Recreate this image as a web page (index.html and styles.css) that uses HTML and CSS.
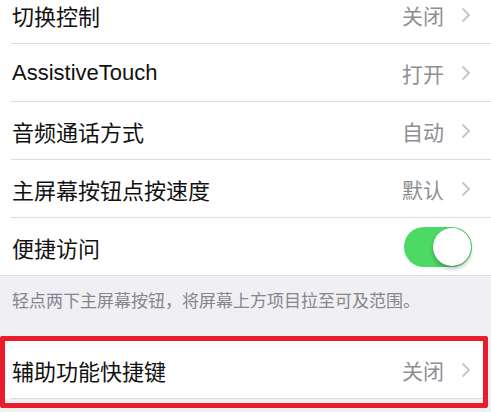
FILE: index.html
```html
<!DOCTYPE html>
<html lang="zh-CN">
<head>
    <meta charset="UTF-8">
    <meta name="viewport" content="width=device-width, initial-scale=1.0">
    <title>辅助功能</title>
    <link rel="stylesheet" href="styles.css">
</head>
<body>
  <div class="group first">
    <div class="row">
      <span class="label">切换控制</span>
      <span class="value">关闭</span>
      <svg class="chev" width="10" height="16" viewBox="0 0 10 16"><polyline points="1.5,1.5 8,8 1.5,14.5"/></svg>
    </div>
    <div class="row">
      <span class="label">AssistiveTouch</span>
      <span class="value">打开</span>
      <svg class="chev" width="10" height="16" viewBox="0 0 10 16"><polyline points="1.5,1.5 8,8 1.5,14.5"/></svg>
    </div>
    <div class="row">
      <span class="label">音频通话方式</span>
      <span class="value">自动</span>
      <svg class="chev" width="10" height="16" viewBox="0 0 10 16"><polyline points="1.5,1.5 8,8 1.5,14.5"/></svg>
    </div>
    <div class="row">
      <span class="label">主屏幕按钮点按速度</span>
      <span class="value">默认</span>
      <svg class="chev" width="10" height="16" viewBox="0 0 10 16"><polyline points="1.5,1.5 8,8 1.5,14.5"/></svg>
    </div>
    <div class="row last">
      <span class="label">便捷访问</span>
      <div class="toggle on"><div class="knob"></div></div>
    </div>
  </div>

  <p class="note">轻点两下主屏幕按钮，将屏幕上方项目拉至可及范围。</p>

  <div class="marked">
    <div class="group">
      <div class="row">
        <span class="label">辅助功能快捷键</span>
        <span class="value">关闭</span>
        <svg class="chev" width="10" height="16" viewBox="0 0 10 16"><polyline points="1.5,1.5 8,8 1.5,14.5"/></svg>
      </div>
    </div>
  </div>
</body>
</html>
```

FILE: styles.css
```css
body {
  margin: 0;
  background-color: #efeff4;
  font-family: "Liberation Sans", "Noto Sans CJK SC", sans-serif;
  overflow: hidden;
}

.group {
  background-color: #fff;
}

.first {
  margin-top: -14px;
}

.row {
  display: flex;
  align-items: center;
  height: 58px;
  padding: 0 20px 0 12px;
  position: relative;
}

.row::after {
  content: "";
  position: absolute;
  left: 11px;
  right: 0;
  bottom: 0;
  height: 1px;
  background-color: #dcdce0;
}

.row.last::after {
  left: 0;
}

.label {
  flex: 1;
  font-size: 22px;
  color: #111;
}

.value {
  font-size: 21px;
  color: #8e8e93;
  margin-right: 17px;
}

.chev {
  fill: none;
  stroke: #c7c7cc;
  stroke-width: 2;
}

.toggle {
  width: 68px;
  height: 40px;
  border-radius: 20px;
  background-color: #4cd964;
  position: relative;
  margin-right: -1px;
}

.knob {
  position: absolute;
  top: 1px;
  right: 1px;
  width: 38px;
  height: 38px;
  border-radius: 50%;
  background-color: #fff;
  box-shadow: 0 3px 4px rgba(0, 0, 0, 0.25), 0 0 1px rgba(0, 0, 0, 0.2);
}

.note {
  margin: 0;
  height: 60px;
  box-sizing: border-box;
  padding: 14px 12px 0;
  font-family: "Noto Sans CJK SC", sans-serif;
  font-size: 17px;
  line-height: 20px;
  color: #86868b;
}

/* red annotation frame around the last row */
.marked {
  margin-right: 3px;
  border: 5px solid #ea1c2b;
  border-radius: 2px;
  padding-bottom: 4px;
}

.marked .row {
  padding: 0 12px 0 7px;
}

.marked .row::after {
  left: 6px;
}
```
